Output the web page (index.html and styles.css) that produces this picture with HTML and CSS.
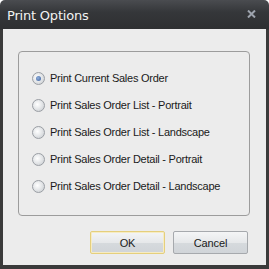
FILE: index.html
```html
<!DOCTYPE html>
<html>
<head>
<meta charset="utf-8">
<link rel="stylesheet" href="styles.css">
</head>
<body>
<div class="window">
  <div class="titlebar">
    <span class="title">Print Options</span>
    <svg class="close" width="9" height="8" viewBox="0 0 9 8"><path d="M1 0.5 L8 7.5 M8 0.5 L1 7.5" stroke="#9ea4ae" stroke-width="2"/></svg>
  </div>
  <div class="client">
    <div class="group">
      <label class="opt"><span class="radio checked"></span>Print Current Sales Order</label>
      <label class="opt"><span class="radio"></span>Print Sales Order List - Portrait</label>
      <label class="opt"><span class="radio"></span>Print Sales Order List - Landscape</label>
      <label class="opt"><span class="radio"></span>Print Sales Order Detail - Portrait</label>
      <label class="opt"><span class="radio"></span>Print Sales Order Detail - Landscape</label>
    </div>
    <div class="buttons">
      <button class="btn default">OK</button>
      <button class="btn">Cancel</button>
    </div>
  </div>
</div>
</body>
</html>
```

FILE: styles.css
```css
html, body {
  margin: 0;
  padding: 0;
  background: #ffffff;
}
.window {
  width: 269px;
  height: 269px;
  box-sizing: border-box;
  background: linear-gradient(#4a4c50 0px, #35373a 12px, #2e2f31 29px, #3a3a3a 30px);
  border-radius: 5px 5px 0 0;
  padding: 0 3px 4px 3px;
  display: flex;
  flex-direction: column;
  font-family: "Liberation Sans", sans-serif;
}
.titlebar {
  height: 29px;
  display: flex;
  align-items: center;
  justify-content: space-between;
  padding: 0 10px 0 4px;
}
.title {
  color: #f2f2f2;
  font-family: "DejaVu Sans", sans-serif;
  font-size: 13px;
  letter-spacing: -0.2px;
  margin-top: 1px;
}
.close {
  margin-top: -1px;
}
.client {
  flex: 1;
  background: #ececec;
  display: flex;
  flex-direction: column;
  padding: 22px 16px 0 15px;
}
.group {
  height: 165px;
  box-sizing: border-box;
  border: 1px solid #9c9c9c;
  border-radius: 4px;
  padding: 19px 0 0 13px;
  display: flex;
  flex-direction: column;
  gap: 13px;
}
.opt {
  display: flex;
  align-items: center;
  height: 14px;
  white-space: nowrap;
  font-family: "Liberation Sans", sans-serif;
  font-size: 11px;
  letter-spacing: -0.25px;
  color: #1a1a1a;
}
.radio {
  width: 11px;
  height: 11px;
  border-radius: 50%;
  border: 1px solid #9a9ea4;
  background: radial-gradient(circle at 40% 40%, #ffffff 0, #e6e8ea 45%, #c4c8cc 100%);
  margin-right: 5px;
  flex: none;
  position: relative;
}
.radio.checked::after {
  content: "";
  position: absolute;
  left: 3px;
  top: 3px;
  width: 5px;
  height: 5px;
  border-radius: 50%;
  background: radial-gradient(circle at 40% 40%, #8eaedc, #3c5f9a);
}
.buttons {
  display: flex;
  justify-content: flex-end;
  gap: 8px;
  padding: 15px 2px 0 0;
}
.btn {
  width: 75px;
  height: 23px;
  border: 1px solid #a6a9ad;
  border-radius: 2px;
  background: linear-gradient(#f4f5f6 0%, #e6e8ea 50%, #d6dadd 51%, #d0d4d8 100%);
  font-family: "Liberation Sans", sans-serif;
  font-size: 11px;
  letter-spacing: -0.1px;
  color: #1a1a1a;
  padding: 0;
}
.btn.default {
  border-color: #e5cf7c;
  box-shadow: inset 0 0 0 1px #f6ecc4;
}
```
